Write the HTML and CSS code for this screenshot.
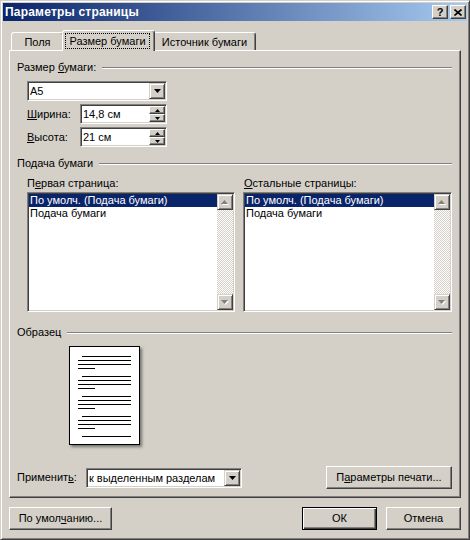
FILE: index.html
```html
<!DOCTYPE html>
<html lang="ru">

<head>
  <meta charset="UTF-8">
  <meta name="viewport" content="width=device-width, initial-scale=1.0">
  <title>Параметры страницы</title>
  <link rel="stylesheet" href="styles.css">
</head>

<body>
  <div class="window">
    <div class="titlebar">
      <span class="title">Параметры страницы</span>
      <div class="title-buttons">
        <span class="tbtn tbtn-help">?</span>
        <span class="tbtn">
          <svg width="8" height="7" viewBox="0 0 8 7"><path d="M0.5 0.5 L7.5 6.5 M7.5 0.5 L0.5 6.5" stroke="#000" stroke-width="1.6" fill="none"/></svg>
        </span>
      </div>
    </div>

    <div class="client">
      <div class="tabs">
        <div class="tab tab-fields">Поля</div>
        <div class="tab tab-active"><span class="focus">Размер бумаги</span></div>
        <div class="tab tab-source">Источник бумаги</div>
      </div>

      <div class="panel">
        <div class="group-head">
          <span>Размер <u>б</u>умаги:</span><i class="etch etch-wide"></i>
        </div>
        <div class="size-block">
          <div class="combo combo-size">
            <span class="combo-text">A5</span>
            <span class="drop-btn"><svg width="7" height="4" viewBox="0 0 7 4"><polygon points="0,0 7,0 3.5,4" fill="#000"/></svg></span>
          </div>
          <div class="field-row">
            <label class="field-label"><u>Ш</u>ирина:</label>
            <div class="spin">
              <span class="spin-text">14,8 см</span>
              <span class="spin-btns">
                <span class="spin-btn"><svg width="5" height="3" viewBox="0 0 5 3"><polygon points="2.5,0 5,3 0,3" fill="#000"/></svg></span>
                <span class="spin-btn"><svg width="5" height="3" viewBox="0 0 5 3"><polygon points="0,0 5,0 2.5,3" fill="#000"/></svg></span>
              </span>
            </div>
          </div>
          <div class="field-row">
            <label class="field-label"><u>В</u>ысота:</label>
            <div class="spin">
              <span class="spin-text">21 см</span>
              <span class="spin-btns">
                <span class="spin-btn"><svg width="5" height="3" viewBox="0 0 5 3"><polygon points="2.5,0 5,3 0,3" fill="#000"/></svg></span>
                <span class="spin-btn"><svg width="5" height="3" viewBox="0 0 5 3"><polygon points="0,0 5,0 2.5,3" fill="#000"/></svg></span>
              </span>
            </div>
          </div>
        </div>

        <div class="group-head group-feed">
          <span>Подача бумаги</span><i class="etch etch-wide"></i>
        </div>
        <div class="feed">
          <div class="feed-col">
            <div class="list-label">П<u>е</u>рвая страница:</div>
            <div class="listbox">
              <div class="list-items">
                <div class="item selected">По умолч. (Подача бумаги)</div>
                <div class="item">Подача бумаги</div>
              </div>
              <div class="scrollbar">
                <span class="sb-btn"><svg width="8" height="5" viewBox="0 0 8 5"><polygon points="4.5,1 8,5 1,5" fill="#fff"/><polygon points="3.5,0 7,4 0,4" fill="#808080"/></svg></span>
                <span class="sb-track"></span>
                <span class="sb-btn"><svg width="8" height="5" viewBox="0 0 8 5"><polygon points="1,1 8,1 4.5,5" fill="#fff"/><polygon points="0,0 7,0 3.5,4" fill="#808080"/></svg></span>
              </div>
            </div>
          </div>
          <div class="feed-col">
            <div class="list-label list-label-other"><u>О</u>стальные страницы:</div>
            <div class="listbox">
              <div class="list-items">
                <div class="item selected">По умолч. (Подача бумаги)</div>
                <div class="item">Подача бумаги</div>
              </div>
              <div class="scrollbar">
                <span class="sb-btn"><svg width="8" height="5" viewBox="0 0 8 5"><polygon points="4.5,1 8,5 1,5" fill="#fff"/><polygon points="3.5,0 7,4 0,4" fill="#808080"/></svg></span>
                <span class="sb-track"></span>
                <span class="sb-btn"><svg width="8" height="5" viewBox="0 0 8 5"><polygon points="1,1 8,1 4.5,5" fill="#fff"/><polygon points="0,0 7,0 3.5,4" fill="#808080"/></svg></span>
              </div>
            </div>
          </div>
        </div>

        <div class="group-head group-sample">
          <span>Образец</span><i class="etch"></i>
        </div>
        <div class="sample">
          <svg class="page" width="71" height="99" viewBox="0 0 71 99">
            <rect x="0.5" y="0.5" width="70" height="98" fill="#fff" stroke="#000"/>
            <g fill="#000">
              <rect x="13" y="10" width="49" height="1"/>
              <rect x="9" y="14" width="53" height="1"/>
              <rect x="9" y="18" width="53" height="1"/>
              <rect x="9" y="22" width="17" height="1"/>
              <rect x="13" y="30" width="49" height="1"/>
              <rect x="9" y="34" width="53" height="1"/>
              <rect x="9" y="38" width="53" height="1"/>
              <rect x="9" y="42" width="17" height="1"/>
              <rect x="13" y="50" width="49" height="1"/>
              <rect x="9" y="54" width="53" height="1"/>
              <rect x="9" y="58" width="53" height="1"/>
              <rect x="9" y="62" width="17" height="1"/>
              <rect x="13" y="70" width="49" height="1"/>
              <rect x="9" y="74" width="53" height="1"/>
              <rect x="9" y="78" width="53" height="1"/>
              <rect x="9" y="82" width="17" height="1"/>
              <rect x="13" y="90" width="49" height="1"/>
            </g>
          </svg>
        </div>

        <div class="apply-row">
          <label class="apply-label">Применит<u>ь</u>:</label>
          <div class="combo combo-apply">
            <span class="combo-text">к выделенным разделам</span>
            <span class="drop-btn"><svg width="7" height="4" viewBox="0 0 7 4"><polygon points="0,0 7,0 3.5,4" fill="#000"/></svg></span>
          </div>
          <button class="btn btn-print">П<u>а</u>раметры печати...</button>
        </div>
      </div>

      <div class="footer">
        <button class="btn btn-defaults">По умол<u>ч</u>анию...</button>
        <button class="btn btn-ok">ОК</button>
        <button class="btn btn-cancel">Отмена</button>
      </div>
    </div>
  </div>
</body>

</html>
```

FILE: styles.css
```css
body {
  margin: 0;
  font-family: "Liberation Sans", Arial, sans-serif;
  font-size: 11px;
  line-height: 13px;
  color: #000;
}

u {
  text-underline-offset: 1px;
}

.window {
  width: 470px;
  height: 540px;
  box-sizing: border-box;
  display: flex;
  flex-direction: column;
  padding: 2px;
  background-color: #D4D0C8;
  border: 1px solid;
  border-color: #D4D0C8 #404040 #404040 #D4D0C8;
  box-shadow: inset 1px 1px #fff, inset -1px -1px #808080;
}

/* title bar */
.titlebar {
  height: 18px;
  display: flex;
  align-items: center;
  justify-content: space-between;
  padding-left: 2px;
  background: linear-gradient(to right, #0A246A, #A6CAF0);
}

.title {
  color: #fff;
  font-weight: bold;
  font-size: 12px;
  letter-spacing: 0.2px;
}

.title-buttons {
  display: flex;
  gap: 2px;
  margin-right: 1px;
}

.tbtn {
  width: 16px;
  height: 14px;
  box-sizing: border-box;
  display: flex;
  align-items: center;
  justify-content: center;
  background-color: #D4D0C8;
  border: 1px solid;
  border-color: #fff #404040 #404040 #fff;
  box-shadow: inset -1px -1px #808080;
}

.tbtn-help {
  font-weight: bold;
  font-size: 11px;
  padding-top: 1px;
}

/* client area */
.client {
  flex: 1;
  padding: 9px 6px 0;
}

.tabs {
  display: flex;
  align-items: flex-end;
  height: 20px;
  padding-left: 2px;
}

.tab {
  height: 18px;
  box-sizing: border-box;
  display: flex;
  align-items: center;
  justify-content: center;
  padding-top: 2px;
  background-color: #D4D0C8;
  border-top: 1px solid #fff;
  border-left: 1px solid #fff;
  border-right: 1px solid #404040;
  box-shadow: inset -1px 0 #808080;
  border-radius: 3px 3px 0 0;
}

.tab-fields {
  width: 53px;
}

.tab-active {
  width: 93px;
  height: 21px;
  margin: 0 -2px -1px;
  padding-top: 0;
  z-index: 1;
}

.tab-source {
  width: 103px;
}

.focus {
  width: 85px;
  height: 16px;
  box-sizing: border-box;
  display: flex;
  align-items: center;
  justify-content: center;
  border: 1px dotted #000;
  margin-right: 2px;
}

.panel {
  height: 448px;
  box-sizing: border-box;
  display: flex;
  flex-direction: column;
  padding: 10px 8px 8px 7px;
  border: 1px solid;
  border-color: #fff #404040 #404040 #fff;
  box-shadow: inset -1px -1px #808080;
}

.group-head {
  display: flex;
  align-items: center;
  height: 13px;
}

.etch {
  flex: 1;
  margin-left: 6px;
  border-top: 1px solid #808080;
  border-bottom: 1px solid #fff;
}

.group-feed {
  margin-top: 10px;
}

.group-sample {
  margin-top: 14px;
}

.size-block {
  padding-left: 10px;
  margin-top: 7px;
}

/* sunken fields */
.combo,
.spin,
.listbox {
  box-sizing: border-box;
  display: flex;
  padding: 1px;
  background-color: #fff;
  border: 1px solid;
  border-color: #808080 #fff #fff #808080;
  box-shadow: inset 1px 1px #404040, inset -1px -1px #D4D0C8;
}

.combo {
  height: 20px;
}

.combo-size {
  width: 140px;
}

.combo-text,
.spin-text {
  flex: 1;
  padding-left: 1px;
  line-height: 16px;
  white-space: nowrap;
  overflow: hidden;
}

.drop-btn {
  width: 16px;
  height: 16px;
  box-sizing: border-box;
  display: flex;
  align-items: center;
  justify-content: center;
  background-color: #D4D0C8;
  border: 1px solid;
  border-color: #D4D0C8 #404040 #404040 #D4D0C8;
  box-shadow: inset 1px 1px #fff, inset -1px -1px #808080;
}

.field-row {
  display: flex;
  align-items: center;
  margin-top: 3px;
}

.field-label {
  width: 53px;
}

.spin {
  width: 87px;
  height: 20px;
}

.spin-btns {
  display: flex;
  flex-direction: column;
  width: 16px;
}

.spin-btn {
  height: 8px;
  box-sizing: border-box;
  display: flex;
  align-items: center;
  justify-content: center;
  background-color: #D4D0C8;
  border: 1px solid;
  border-color: #fff #404040 #404040 #fff;
  box-shadow: inset -1px -1px #808080;
}

/* paper feed lists */
.feed {
  display: grid;
  grid-template-columns: 208px 209px;
  column-gap: 8px;
  padding-left: 10px;
  margin-top: 7px;
}

.list-label {
  height: 13px;
  margin-bottom: 2px;
}

.list-label-other {
  padding-left: 1px;
}

.listbox {
  height: 120px;
}

.list-items {
  flex: 1;
}

.item {
  height: 13px;
  padding-left: 1px;
  white-space: nowrap;
}

.selected {
  background-color: #0A246A;
  color: #fff;
}

.scrollbar {
  width: 16px;
  display: flex;
  flex-direction: column;
}

.sb-btn {
  height: 16px;
  box-sizing: border-box;
  display: flex;
  align-items: center;
  justify-content: center;
  background-color: #D4D0C8;
  border: 1px solid;
  border-color: #D4D0C8 #404040 #404040 #D4D0C8;
  box-shadow: inset 1px 1px #fff, inset -1px -1px #808080;
}

.sb-track {
  flex: 1;
  background: repeating-conic-gradient(#fff 0 25%, #D4D0C8 0 50%) 0 0 / 2px 2px;
}

/* sample */
.sample {
  padding-left: 52px;
  margin-top: 7px;
}

.page {
  display: block;
  filter: drop-shadow(2px 2px 1.5px rgba(0, 0, 0, 0.45));
}

/* apply row */
.apply-row {
  margin-top: auto;
  display: flex;
  align-items: center;
  height: 23px;
}

.apply-label {
  width: 69px;
}

.combo-apply {
  width: 156px;
}

.btn {
  height: 23px;
  box-sizing: border-box;
  padding: 0;
  font: inherit;
  color: #000;
  background-color: #D4D0C8;
  border: 1px solid;
  border-color: #fff #404040 #404040 #fff;
  box-shadow: inset -1px -1px #808080;
}

.btn-print {
  width: 126px;
  margin-left: auto;
}

.footer {
  display: flex;
  gap: 9px;
  margin-top: 9px;
}

.btn-defaults {
  width: 103px;
}

.btn-ok {
  width: 75px;
  margin-left: auto;
  border-color: #000;
  box-shadow: inset 1px 1px #fff, inset -1px -1px #404040, inset -2px -2px #808080;
}

.btn-cancel {
  width: 75px;
}
```
